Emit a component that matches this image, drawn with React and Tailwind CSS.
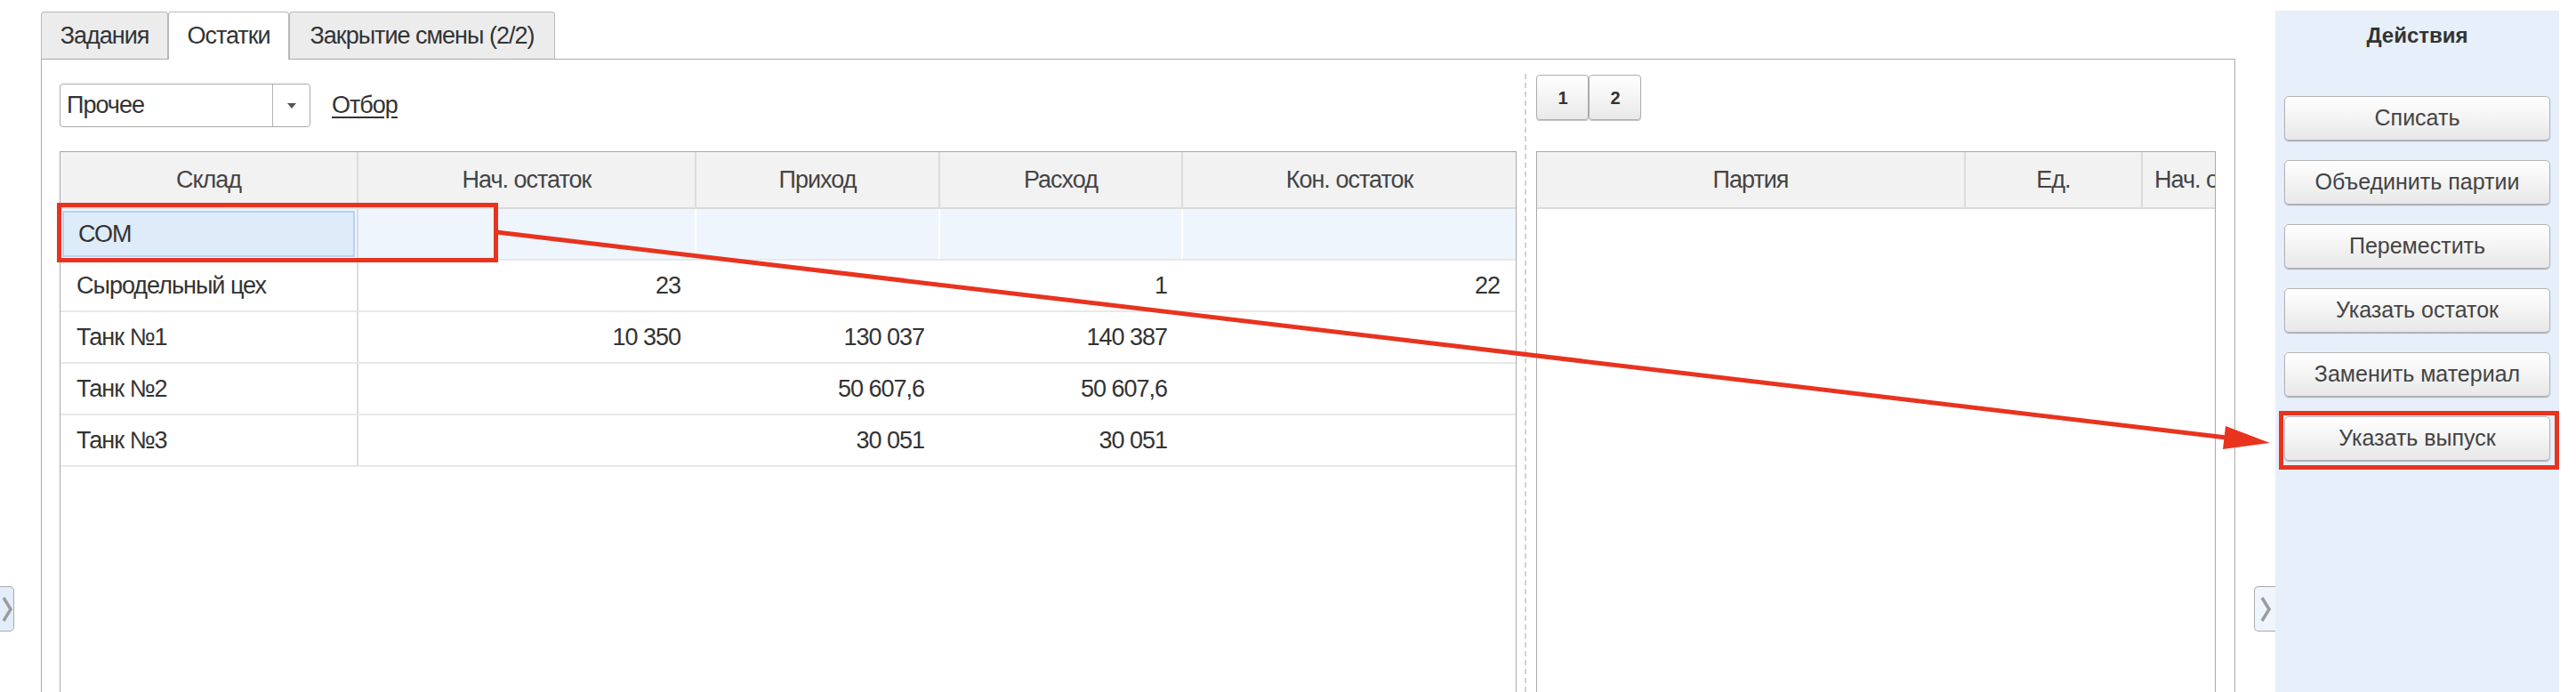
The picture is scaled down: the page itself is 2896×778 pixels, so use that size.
import React from 'react';

const rows = [
  { name: 'СОМ', vals: ['', '', '', ''], selected: true },
  { name: 'Сыродельный цех', vals: ['23', '', '1', '22'] },
  { name: 'Танк №1', vals: ['10 350', '130 037', '140 387', ''] },
  { name: 'Танк №2', vals: ['', '50 607,6', '50 607,6', ''] },
  { name: 'Танк №3', vals: ['', '30 051', '30 051', ''] },
];

const leftHeaders = ['Склад', 'Нач. остаток', 'Приход', 'Расход', 'Кон. остаток'];

const actions = [
  'Списать',
  'Объединить партии',
  'Переместить',
  'Указать остаток',
  'Заменить материал',
  'Указать выпуск',
];

const Chevron = () => (
  <svg width="14" height="32" viewBox="0 0 14 32" className="shrink-0">
    <polyline points="3,3 11,16 3,29" fill="none" stroke="#9c9c9c" strokeWidth="3.5" />
  </svg>
);

const Tab = ({ label, active, width }) => (
  <div
    className={`${width} flex items-center justify-center rounded-t-[4px] border border-b-0 border-[#b8b8b8] ${
      active ? 'relative z-10 -mb-px h-[54px] bg-white' : 'h-[53px] bg-[#ececec]'
    }`}
  >
    {label}
  </div>
);

const HeaderCell = ({ children, last }) => (
  <div
    className={`flex h-[62px] items-center justify-center overflow-hidden whitespace-nowrap bg-[#f2f2f2] ${
      last ? '' : 'border-r-2 border-[#dcdcdc]'
    }`}
  >
    {children}
  </div>
);

const SmallButton = ({ children }) => (
  <div className="flex h-[51px] w-[59px] items-center justify-center rounded-[4px] border border-[#adadad] bg-gradient-to-b from-white to-[#e9e9e9] text-[20px] font-bold text-[#333] shadow-[0_1px_1px_rgba(0,0,0,0.25)]">
    {children}
  </div>
);

export default function App() {
  return (
    <div className="relative flex h-[778px] w-[2896px] overflow-hidden bg-white font-['Liberation_Sans',Arial,sans-serif] text-[27px] tracking-[-1px] text-[#333]">
      {/* left collapse handle */}
      <div className="w-[46px] shrink-0 pt-[659px]">
        <div className="flex h-[51px] w-[16px] items-center justify-end overflow-hidden rounded-r-[5px] border border-l-0 border-[#a9a9a9] bg-[#e4eefa]">
          <Chevron />
        </div>
      </div>

      {/* main form */}
      <div className="flex w-[2467px] shrink-0 flex-col pt-[13px]">
        <div className="flex h-[53px] items-end">
          <Tab label="Задания" width="w-[143px]" />
          <Tab label="Остатки" width="w-[136px]" active />
          <Tab label="Закрытие смены (2/2)" width="w-[299px]" />
        </div>

        <div className="flex flex-1 border border-b-0 border-[#ababab]">
          {/* left part */}
          <div className="flex w-[1658px] flex-col pl-[20px] pt-[27px]">
            <div className="flex h-[49px] items-center">
              <div className="flex h-[49px] w-[282px] rounded-[4px] border border-[#a8a8a8]">
                <div className="flex flex-1 items-center pl-[7px]">Прочее</div>
                <div className="flex w-[42px] items-center justify-center border-l border-[#b4b4b4]">
                  <svg width="10" height="6" viewBox="0 0 10 6">
                    <polygon points="0,0 10,0 5,6" fill="#555" />
                  </svg>
                </div>
              </div>
              <span className="ml-[24px] underline underline-offset-[4px]">Отбор</span>
            </div>

            <div className="mt-[27px] flex flex-1 flex-col border border-b-0 border-[#a8a8a8]">
              <div className="grid grid-cols-[335px_380px_274px_273px_1fr] border-b-2 border-[#dadada] text-[#444]">
                {leftHeaders.map((h, i) => (
                  <HeaderCell key={h} last={i === leftHeaders.length - 1}>
                    {h}
                  </HeaderCell>
                ))}
              </div>
              {rows.map((r) => (
                <div
                  key={r.name}
                  className={`grid h-[58px] grid-cols-[335px_380px_274px_273px_1fr] border-b-2 border-[#e8e8e8] ${
                    r.selected ? 'bg-[#eef5fc]' : ''
                  }`}
                >
                  <div className="border-r-2 border-[#dcdcdc] p-[2px]">
                    <div
                      className={`flex h-full items-center pl-[16px] ${
                        r.selected ? 'border-2 border-[#b7d2f0] bg-[#deebf9]' : ''
                      }`}
                    >
                      {r.name}
                    </div>
                  </div>
                  {r.vals.map((v, i) => (
                    <div
                      key={i}
                      className={`flex items-center justify-end pr-[18px] ${
                        r.selected && i < 3 ? 'border-r-2 border-white' : ''
                      }`}
                    >
                      {v}
                    </div>
                  ))}
                </div>
              ))}
            </div>
          </div>

          {/* splitter */}
          <div className="ml-[9px] mt-[16px] w-0 border-l-2 border-dashed border-[#d2d2d2]" />

          {/* right part */}
          <div className="ml-[11px] flex w-[764px] flex-col pt-[17px]">
            <div className="flex h-[51px]">
              <SmallButton>1</SmallButton>
              <SmallButton>2</SmallButton>
            </div>
            <div className="mt-[35px] flex flex-1 flex-col border border-b-0 border-[#a8a8a8]">
              <div className="grid grid-cols-[482px_199px_1fr] border-b-2 border-[#dadada] text-[#444]">
                <HeaderCell>Партия</HeaderCell>
                <HeaderCell>Ед.</HeaderCell>
                <div className="flex h-[62px] items-center overflow-hidden whitespace-nowrap bg-[#f2f2f2] pl-[13px]">
                  Нач. остаток
                </div>
              </div>
            </div>
          </div>
        </div>
      </div>

      {/* right collapse handle */}
      <div className="flex w-[45px] shrink-0 justify-end pt-[659px]">
        <div className="flex h-[51px] w-[24px] items-center justify-center rounded-l-[5px] border border-r-0 border-[#a9a9a9] bg-[#eef5fd]">
          <Chevron />
        </div>
      </div>

      {/* actions panel */}
      <div className="mt-[12px] flex w-[319px] shrink-0 flex-col bg-[#e6effa] px-[10px] text-[25px] tracking-normal">
        <div className="pt-[16px] text-center text-[24px] font-bold leading-[24px] text-[#333]">Действия</div>
        <div className="mt-[56px] flex flex-col gap-[22px]">
          {actions.map((a) => (
            <div
              key={a}
              className="flex h-[50px] items-center justify-center rounded-[5px] border border-[#b4b4b4] bg-gradient-to-b from-white to-[#e8e8e8] text-[#444] shadow-[0_1px_1px_rgba(0,0,0,0.3)]"
            >
              {a}
            </div>
          ))}
        </div>
      </div>
      <div className="w-[19px] shrink-0" />

      {/* annotation overlay */}
      <svg
        className="pointer-events-none absolute left-0 top-0"
        width="2896"
        height="778"
        viewBox="0 0 2896 778"
      >
        <rect x="66.5" y="230.5" width="491" height="62" fill="none" stroke="#e8331f" strokeWidth="5" />
        <rect x="2564.5" y="464.5" width="310" height="61" fill="none" stroke="#e8331f" strokeWidth="5" />
        <line x1="558" y1="261" x2="2503" y2="492" stroke="#e8331f" strokeWidth="5" />
        <polygon points="2552,498 2502,479 2499,505" fill="#e8331f" />
      </svg>
    </div>
  );
}
